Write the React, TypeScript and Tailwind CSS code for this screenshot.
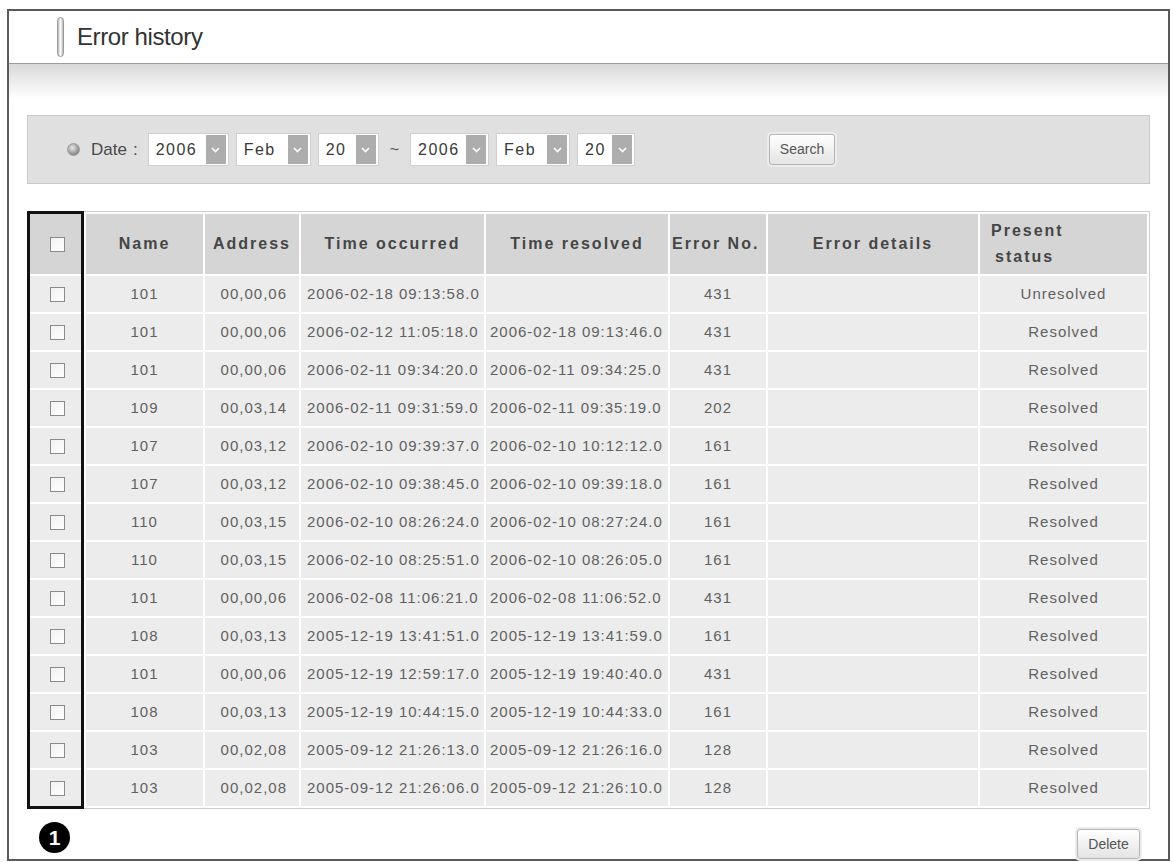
import React from "react";

type ErrorRow = {
  name: string;
  address: string;
  occurred: string;
  resolved: string;
  errorNo: string;
  status: string;
};

const rows: ErrorRow[] = [
  { name: "101", address: "00,00,06", occurred: "2006-02-18 09:13:58.0", resolved: "", errorNo: "431", status: "Unresolved" },
  { name: "101", address: "00,00,06", occurred: "2006-02-12 11:05:18.0", resolved: "2006-02-18 09:13:46.0", errorNo: "431", status: "Resolved" },
  { name: "101", address: "00,00,06", occurred: "2006-02-11 09:34:20.0", resolved: "2006-02-11 09:34:25.0", errorNo: "431", status: "Resolved" },
  { name: "109", address: "00,03,14", occurred: "2006-02-11 09:31:59.0", resolved: "2006-02-11 09:35:19.0", errorNo: "202", status: "Resolved" },
  { name: "107", address: "00,03,12", occurred: "2006-02-10 09:39:37.0", resolved: "2006-02-10 10:12:12.0", errorNo: "161", status: "Resolved" },
  { name: "107", address: "00,03,12", occurred: "2006-02-10 09:38:45.0", resolved: "2006-02-10 09:39:18.0", errorNo: "161", status: "Resolved" },
  { name: "110", address: "00,03,15", occurred: "2006-02-10 08:26:24.0", resolved: "2006-02-10 08:27:24.0", errorNo: "161", status: "Resolved" },
  { name: "110", address: "00,03,15", occurred: "2006-02-10 08:25:51.0", resolved: "2006-02-10 08:26:05.0", errorNo: "161", status: "Resolved" },
  { name: "101", address: "00,00,06", occurred: "2006-02-08 11:06:21.0", resolved: "2006-02-08 11:06:52.0", errorNo: "431", status: "Resolved" },
  { name: "108", address: "00,03,13", occurred: "2005-12-19 13:41:51.0", resolved: "2005-12-19 13:41:59.0", errorNo: "161", status: "Resolved" },
  { name: "101", address: "00,00,06", occurred: "2005-12-19 12:59:17.0", resolved: "2005-12-19 19:40:40.0", errorNo: "431", status: "Resolved" },
  { name: "108", address: "00,03,13", occurred: "2005-12-19 10:44:15.0", resolved: "2005-12-19 10:44:33.0", errorNo: "161", status: "Resolved" },
  { name: "103", address: "00,02,08", occurred: "2005-09-12 21:26:13.0", resolved: "2005-09-12 21:26:16.0", errorNo: "128", status: "Resolved" },
  { name: "103", address: "00,02,08", occurred: "2005-09-12 21:26:06.0", resolved: "2005-09-12 21:26:10.0", errorNo: "128", status: "Resolved" },
];

const Checkbox = () => (
  <span className="inline-block w-[15px] h-[15px] border border-[#8a8a8a] bg-gradient-to-br from-[#f2f2f2] to-white align-middle" />
);

const Select = ({ value, width }: { value: string; width: string }) => (
  <div className={`flex items-center h-[33px] bg-white border border-[#cfcfcf] pl-[7px] pr-[2px] ${width}`}>
    <span className="flex-1 text-[16px] tracking-[1.5px] text-[#3a3a3a]">{value}</span>
    <span className="flex items-center justify-center w-[20px] h-[29px] bg-[#adadad]">
      <svg width="9" height="6" viewBox="0 0 9 6">
        <path d="M1 1 L4.5 4.5 L8 1" fill="none" stroke="#fff" strokeWidth="1.6" />
      </svg>
    </span>
  </div>
);

const Button = ({ label, className }: { label: string; className: string }) => (
  <button
    className={`rounded-[3px] border border-[#b4b4b4] bg-gradient-to-b from-white to-[#e4e4e4] shadow-[0_0_0_2px_#ececec] text-[14px] text-[#555] ${className}`}
  >
    {label}
  </button>
);

export default function App() {
  const cell = "border-2 border-white text-[15px] tracking-[1px] text-[#616161] h-[38px] p-0";
  const head = "border-2 border-white bg-[#d5d5d5] text-[16px] font-bold tracking-[2px] text-[#454545] h-[62px] p-0";

  return (
    <div className="bg-white pt-[9px] pl-[7px] font-['Liberation_Sans',Arial,sans-serif]">
      <div className="w-[1163px] h-[852px] border-2 border-[#5a5a5a] flex flex-col">
        {/* Page title */}
        <div className="h-[53px] flex items-center pl-[48px] border-b border-[#9c9c9c]">
          <div className="w-[7px] h-[40px] rounded-full border border-[#9a9a9a] bg-gradient-to-r from-[#b8b8b8] via-white to-[#b8b8b8]" />
          <h1 className="ml-[13px] text-[24px] tracking-[-0.4px] text-[#333]">Error history</h1>
        </div>
        <div className="h-[36px] bg-gradient-to-b from-[#d9d9d9] via-[#ececec] to-white" />

        {/* Date filter */}
        <div className="mx-[18px] mt-[16px] h-[69px] bg-[#e0e0e0] border border-[#c9c9c9] flex items-center pl-[39px]">
          <span className="w-[13px] h-[13px] rounded-full bg-[radial-gradient(circle_at_40%_35%,#e8e8e8,#8a8a8a_70%)] border border-[#9a9a9a]" />
          <span className="ml-[11px] text-[17px] text-[#4a4a4a]">Date</span>
          <span className="ml-[6px] text-[17px] text-[#4a4a4a]">:</span>
          <div className="ml-[10px] flex items-center gap-[7px]">
            <Select value="2006" width="w-[81px]" />
            <Select value="Feb" width="w-[75px]" />
            <Select value="20" width="w-[61px]" />
            <span className="mx-[4px] text-[16px] text-[#555]">~</span>
            <Select value="2006" width="w-[79px]" />
            <Select value="Feb" width="w-[74px]" />
            <Select value="20" width="w-[58px]" />
          </div>
          <Button label="Search" className="ml-[134px] w-[66px] h-[31px]" />
        </div>

        {/* Error list */}
        <div className="relative mx-[18px] mt-[27px] border border-[#cdcdcd]">
          <table className="w-full table-fixed border-collapse">
            <colgroup>
              <col className="w-[56px]" />
              <col className="w-[119px]" />
              <col className="w-[96px]" />
              <col className="w-[185px]" />
              <col className="w-[184px]" />
              <col className="w-[98px]" />
              <col className="w-[212px]" />
              <col />
            </colgroup>
            <thead>
              <tr>
                <th className={`${head} text-center`}>
                  <Checkbox />
                </th>
                <th className={`${head} text-center`}>Name</th>
                <th className={`${head} text-center`}>Address</th>
                <th className={`${head} text-center`}>Time occurred</th>
                <th className={`${head} text-center`}>Time resolved</th>
                <th className={`${head} text-left pl-[2px] tracking-[1.5px]`}>Error No.</th>
                <th className={`${head} text-center`}>Error details</th>
                <th className={`${head} text-left pl-[11px] leading-[26px]`}>
                  Present
                  <br />
                  <span className="pl-[4px]">status</span>
                </th>
              </tr>
            </thead>
            <tbody className="bg-[#ececec]">
              {rows.map((r, i) => (
                <tr key={i}>
                  <td className={`${cell} text-center`}>
                    <Checkbox />
                  </td>
                  <td className={`${cell} text-center`}>{r.name}</td>
                  <td className={`${cell} text-right pr-[12px]`}>{r.address}</td>
                  <td className={`${cell} text-left pl-[6px]`}>{r.occurred}</td>
                  <td className={`${cell} text-left pl-[4px]`}>{r.resolved}</td>
                  <td className={`${cell} text-center`}>{r.errorNo}</td>
                  <td className={cell}></td>
                  <td className={`${cell} text-center`}>{r.status}</td>
                </tr>
              ))}
            </tbody>
          </table>
          {/* callout around the checkbox column */}
          <div className="absolute -left-px -top-px -bottom-px w-[57px] border-[3px] border-[#111]" />
        </div>

        <div className="flex items-start justify-between pl-[30px] pr-[28px] mt-[13px]">
          <span className="w-[31px] h-[31px] rounded-full bg-black text-white text-[21px] font-bold flex items-center justify-center">
            1
          </span>
          <Button label="Delete" className="mt-[7px] w-[63px] h-[30px]" />
        </div>
      </div>
    </div>
  );
}
